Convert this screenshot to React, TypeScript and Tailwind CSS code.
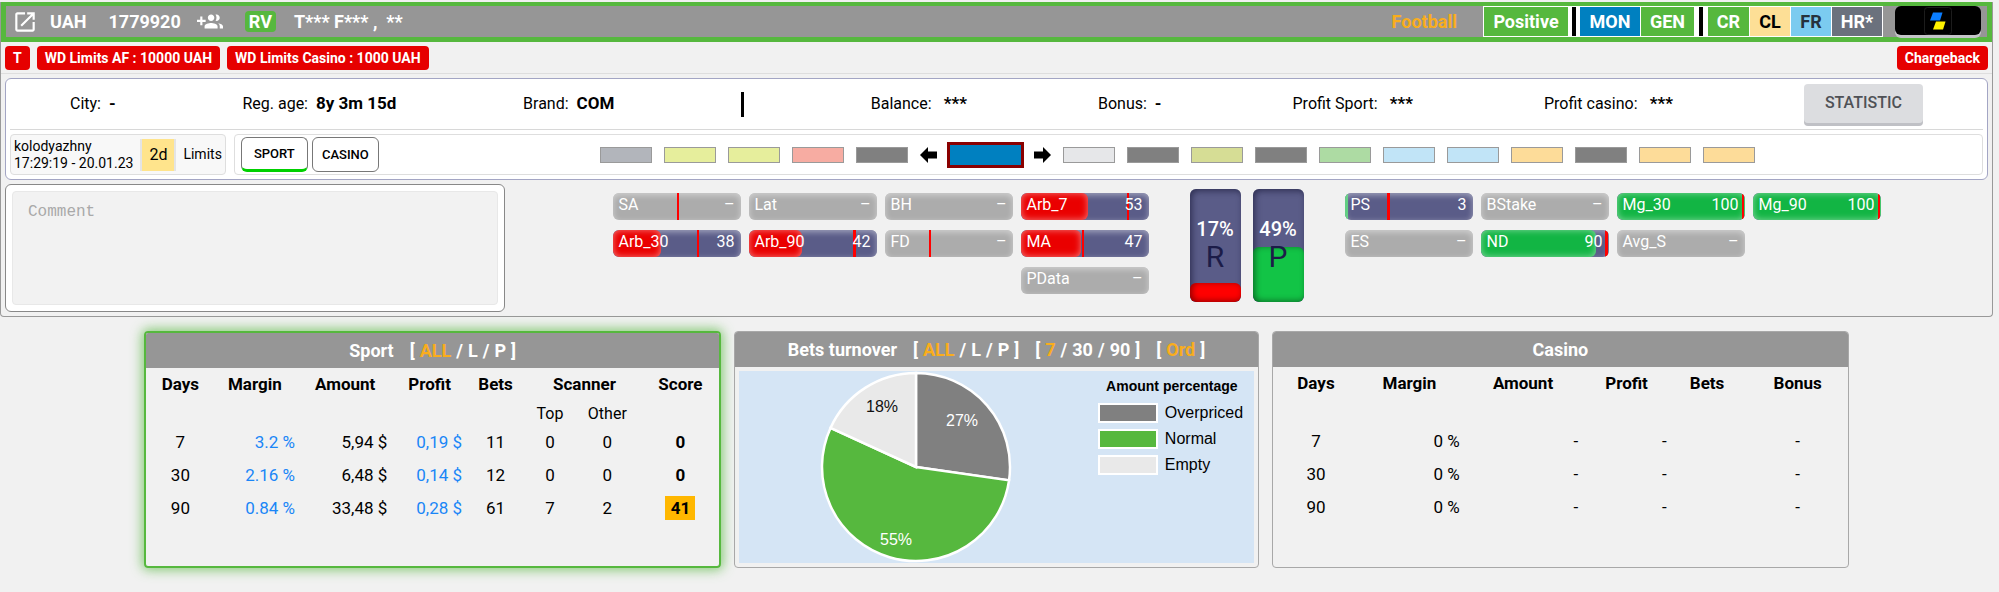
import { ReactNode } from "react";

type Gauge = {
    label: string
    value?: number
    mark?: number
    wide?: boolean
    tone?: 'red' | 'green'
}

const leftGauges: (Gauge | null)[] = [
    { label: 'SA', mark: 50 },
    { label: 'Lat' },
    { label: 'BH' },
    { label: 'Arb_7', value: 53, mark: 83, tone: 'red' },
    { label: 'Arb_30', value: 38, mark: 66, tone: 'red' },
    { label: 'Arb_90', value: 42, mark: 82, wide: true, tone: 'red' },
    { label: 'FD', mark: 35 },
    { label: 'MA', value: 47, mark: 48, tone: 'red' },
    null,
    null,
    null,
    { label: 'PData' },
]

const rightGauges: Gauge[] = [
    { label: 'PS', value: 3, mark: 33, wide: true, tone: 'green' },
    { label: 'BStake' },
    { label: 'Mg_30', value: 100, mark: 98, tone: 'green' },
    { label: 'Mg_90', value: 100, mark: 98, tone: 'green' },
    { label: 'ES' },
    { label: 'ND', value: 90, mark: 97, wide: true, tone: 'green' },
    { label: 'Avg_S' },
]

const before = ['bg-[#b2b5bb]', 'bg-[#e6ee9c]', 'bg-[#e6ee9c]', 'bg-[#f7aca2]', 'bg-[#808080]']
const after = [
    'bg-[#e6e7e9]', 'bg-[#808080]', 'bg-[#d6dd95]', 'bg-[#808080]', 'bg-[#addba3]', 'bg-[#c1e4f7]',
    'bg-[#c1e4f7]', 'bg-[#fddc99]', 'bg-[#808080]', 'bg-[#fddc99]', 'bg-[#fddc99]',
]

const sportRows = [
    { days: 7, margin: '3.2 %', amount: '5,94 $', profit: '0,19 $', bets: 11, top: 0, other: 0, score: 0 },
    { days: 30, margin: '2.16 %', amount: '6,48 $', profit: '0,14 $', bets: 12, top: 0, other: 0, score: 0 },
    { days: 90, margin: '0.84 %', amount: '33,48 $', profit: '0,28 $', bets: 61, top: 7, other: 2, score: 41 },
]

const slices = [
    { name: 'Overpriced', part: 3, fill: '#808080', swatch: 'bg-[#808080]' },
    { name: 'Normal', part: 6, fill: '#56b83e', swatch: 'bg-[#56b83e]' },
    { name: 'Empty', part: 2, fill: '#e9e9e9', swatch: 'bg-[#e9e9e9]' },
]

function GaugeBar({ label, value, mark, wide, tone }: Gauge) {
    const empty = value === undefined
    return (
        <div className={`relative h-[27px] w-32 overflow-hidden rounded-md ${empty ? 'bg-[#acacac]' : 'bg-[#5a5c88]'}`}>
            <div className="absolute inset-0 rounded-md shadow-[inset_0_2px_6px_rgba(255,255,255,0.45)]" />
            {!empty && (
                <div
                    className={`absolute inset-y-0 left-0 rounded-md shadow-[inset_0_0_7px_rgba(255,255,255,0.5)] ${tone === 'red' ? 'bg-[#ea0000]' : 'bg-[#12b544]'}`}
                    style={{ width: `${value}%` }}
                />
            )}
            {mark !== undefined && (
                <div className={`absolute inset-y-0 bg-[#ff0000] ${wide ? 'w-[3px]' : 'w-[2px]'}`} style={{ left: `${mark}%` }} />
            )}
            <div className="relative flex justify-between px-1.5 text-[16px] leading-6 text-white">
                <span>{label}</span>
                <span>{empty ? '–' : value}</span>
            </div>
        </div>
    )
}

function Tower({ value, letter, fill }: { value: number, letter: string, fill: string }) {
    return (
        <div className="relative h-[113px] w-[51px] overflow-hidden rounded-md bg-[#5a5c88] text-center shadow-[inset_2px_2px_6px_rgba(20,20,50,0.6)]">
            <div className={`absolute inset-x-0 bottom-0 rounded-md shadow-[inset_2px_-1px_6px_rgba(0,0,0,0.45)] ${fill}`} style={{ height: `${value}%` }} />
            <div className="relative pt-7">
                <p className="text-[20px] font-medium leading-6 text-white">{value}%</p>
                <p className="text-[30px] leading-8 text-[#1c1c48]">{letter}</p>
            </div>
        </div>
    )
}

function Tag({ children }: { children: ReactNode }) {
    return <span className="rounded bg-[#e60000] px-2 text-[14px] font-bold leading-6 text-white">{children}</span>
}

function Info({ label, value }: { label: string, value: string }) {
    return (
        <p className="whitespace-pre text-[16px]">
            {label}:<span className="ml-2 text-[17px] font-bold">{value}</span>
        </p>
    )
}

function Filter({ items }: { items: string[] }) {
    return (
        <div className="flex gap-[5px]">
            <span>[</span>
            {items.map((item, i) => (
                <span key={item} className="flex gap-[5px]">
                    {i > 0 && <span>/</span>}
                    <button className={i === 0 ? 'text-[#f9ad1c]' : ''}>{item}</button>
                </span>
            ))}
            <span>]</span>
        </div>
    )
}

function Card({ title, filters = [], active, children }: { title: string, filters?: string[][], active?: boolean, children: ReactNode }) {
    return (
        <section className={`flex min-h-[237px] flex-col overflow-hidden rounded ${active ? 'border-2 border-[#56b83e] shadow-[0_0_12px_2px_rgba(86,184,62,0.7)]' : 'border border-[#a8a8a8]'}`}>
            <header className="flex h-[35px] shrink-0 items-center justify-center gap-4 bg-[#969696] text-[18px] font-bold text-white">
                <h2>{title}</h2>
                {filters.map((items) => <Filter key={items[0]} items={items} />)}
            </header>
            {children}
        </section>
    )
}

function Pie() {
    const total = slices.reduce((sum, s) => sum + s.part, 0)
    const point = (n: number) => {
        const a = (n / total) * Math.PI * 2
        return `${96 + 94 * Math.sin(a)} ${96 - 94 * Math.cos(a)}`
    }
    let start = 0
    return (
        <svg viewBox="0 0 192 192" className="h-48 w-48" fontSize="16">
            {slices.map((s) => {
                const from = start
                start += s.part
                return (
                    <path
                        key={s.name}
                        d={`M96 96L${point(from)}A94 94 0 ${s.part > total / 2 ? 1 : 0} 1 ${point(start)}Z`}
                        fill={s.fill}
                        stroke="#fff"
                        strokeWidth="2.5"
                    />
                )
            })}
            <text x="142" y="55" textAnchor="middle" fill="#fff">27%</text>
            <text x="76" y="174" textAnchor="middle" fill="#fff">55%</text>
            <text x="62" y="41" textAnchor="middle" fill="#111">18%</text>
        </svg>
    )
}

function Swatch({ color }: { color: string }) {
    return <button aria-label="level" className={`h-4 w-[52px] border border-[#9a9a9a] ${color}`} />
}

function Arrow({ flip }: { flip?: boolean }) {
    return (
        <svg viewBox="0 0 17 16" className={`h-4 w-[17px] ${flip ? 'rotate-180' : ''}`}>
            <path d="M0 8L8 0V4.5H17V11.5H8V16Z" />
        </svg>
    )
}

export default function App() {
    return (
        <div className="min-h-screen bg-[#f1f1f1] pr-1.5 pt-0.5 font-['Roboto',sans-serif] text-black">
            <div className="rounded-b border border-t-0 border-[#999] pb-1">
                {/* Player bar */}
                <header className="flex h-10 items-center border-[5px] border-t-4 border-[#56b83e] bg-[#969696] text-[18px] font-bold text-white">
                    <a href="#" aria-label="Open player" className="ml-1.5">
                        <svg viewBox="0 0 24 24" className="h-[26px] w-[26px]" fill="currentColor">
                            <path d="M19 19H5V5h7V3H5c-1.11 0-2 .9-2 2v14c0 1.1.89 2 2 2h14c1.1 0 2-.9 2-2v-7h-2v7zM14 3v2h3.59l-9.83 9.83 1.41 1.41L19 6.41V10h2V3h-7z" />
                        </svg>
                    </a>
                    <span className="ml-3">UAH</span>
                    <span className="ml-[22px]">1779920</span>
                    <button aria-label="Add to group" className="ml-4">
                        <svg viewBox="0 0 24 24" className="h-[26px] w-[26px]" fill="currentColor">
                            <path d="M8 10H5V7H3v3H0v2h3v3h2v-3h3v-2zm10 1c1.66 0 2.99-1.34 2.99-3S19.66 5 18 5c-.32 0-.63.05-.91.14.57.81.9 1.79.9 2.86s-.34 2.04-.9 2.86c.28.09.59.14.91.14zm-5 0c1.66 0 2.99-1.34 2.99-3S14.66 5 13 5c-1.66 0-3 1.34-3 3s1.34 3 3 3zm6.62 2.16c.83.73 1.38 1.66 1.38 2.84v2h3v-2c0-1.54-2.37-2.49-4.38-2.84zM13 13c-2 0-6 1-6 3v2h12v-2c0-2-4-3-6-3z" />
                        </svg>
                    </button>
                    <span className="ml-[22px] rounded bg-[#56b83e] px-1 leading-[21px]">RV</span>
                    <span className="ml-[18px]">T*** F*** ,&nbsp; **</span>
                    <span className="ml-auto mr-[26px] text-[#f9ad1c]">Football</span>
                    <div className="flex h-full gap-px bg-white p-px text-center leading-[30px]">
                        <span className="w-[84px] bg-[#56b83e]">Positive</span>
                        <span className="mx-[3px] w-1 bg-black" />
                        <span className="w-[60px] bg-[#0080c0]">MON</span>
                        <span className="w-[53px] bg-[#56b83e]">GEN</span>
                        <span className="mx-1 w-1 bg-black" />
                        <span className="w-[41px] bg-[#56b83e]">CR</span>
                        <span className="w-10 bg-[#fddf96] text-black">CL</span>
                        <span className="w-10 bg-[#7bcbf0] text-[#26323c]">FR</span>
                        <span className="w-[50px] bg-[#6b717d]">HR*</span>
                    </div>
                    <button aria-label="Open profile" className="mb-0.5 ml-3 mr-1.5 flex h-[29px] w-[86px] items-center justify-center rounded-md bg-black shadow-[0_3px_0_#c4c4c8]">
                        <svg viewBox="0 0 28 28" className="h-7 w-7">
                            <rect x="0.5" y="0.5" width="27" height="27" rx="3" fill="#000" stroke="#1c1c1c" />
                            <path d="M9 5.500H18.500L16 13.500H6Z" fill="#0a7dff" />
                            <path d="M12 14.500H21.500L19 22.500H9Z" fill="#fff200" />
                        </svg>
                    </button>
                </header>

                <div className="flex gap-[7px] border-b border-[#dedede] px-1 pb-[3px] pt-1">
                    <Tag>T</Tag>
                    <Tag>WD Limits AF : 10000 UAH</Tag>
                    <Tag>WD Limits Casino : 1000 UAH</Tag>
                    <span className="ml-auto flex"><Tag>Chargeback</Tag></span>
                </div>

                <div className="mx-1 mt-1 rounded-md border border-[#a3a5c4] bg-white px-1 pb-1">
                    <div className="flex h-[51px] items-center justify-between border-b border-[#d8d8d8] px-[60px]">
                        <Info label="City" value="-" />
                        <Info label="Reg. age" value="8y 3m 15d" />
                        <Info label="Brand" value="COM" />
                        <span className="h-[25px] w-[3px] bg-black" />
                        <Info label="Balance" value=" *** " />
                        <Info label="Bonus" value="- " />
                        <Info label="Profit Sport" value=" *** " />
                        <Info label="Profit casino" value=" *** " />
                        <button className="mb-0.5 h-[39px] w-[119px] rounded bg-[#dcdde0] text-[16px] font-medium text-[#4f5156] shadow-[0_3px_0_#bfc0c5]">STATISTIC</button>
                    </div>

                    <div className="mt-1 flex h-[41px] gap-2">
                        <div className="flex items-center rounded border border-[#dedede] bg-[#f8f8f8] px-[3px] text-[14px]">
                            <p className="leading-[17px]">kolodyazhny<br />17:29:19 - 20.01.23</p>
                            <span className="ml-[7px] border-x-2 border-[#e4e4e4] bg-[#ffe48c] px-[7px] text-[16px] leading-8">2d</span>
                            <span className="ml-[7px]">Limits</span>
                        </div>
                        <div className="flex flex-1 items-center gap-1 rounded border border-[#dedede] px-1.5">
                            <button className="h-[35px] w-[67px] rounded-md border border-b-[3px] border-[#777] border-b-[#00d000] text-[13px] font-medium">SPORT</button>
                            <button className="h-[35px] w-[67px] rounded-md border border-[#777] text-[13px] font-medium">CASINO</button>
                            <div className="flex flex-1 items-center justify-center gap-3 pr-1">
                                {before.map((c, i) => <Swatch key={i} color={c} />)}
                                <div className="flex items-center gap-2.5">
                                    <button aria-label="Previous level"><Arrow /></button>
                                    <span className="h-[26px] w-[77px] border-[3px] border-[#8a0000] bg-[#0080c0]" />
                                    <button aria-label="Next level"><Arrow flip /></button>
                                </div>
                                {after.map((c, i) => <Swatch key={i} color={c} />)}
                            </div>
                        </div>
                    </div>
                </div>

                <div className="mx-1 mt-1 flex">
                    <div className="flex h-32 w-[500px] rounded-md border border-[#888] bg-white p-1.5">
                        <textarea
                            aria-label="Comment"
                            placeholder="Comment"
                            className="w-full resize-none rounded border border-[#e8e8e8] bg-[#f2f2f2] px-[15px] py-2 font-['Liberation_Mono',monospace] text-[16px] placeholder:text-[#a9a9a9]"
                        />
                    </div>
                    <div className="flex flex-1 justify-center gap-[41px] pt-[5px]">
                        <div className="mt-1 grid grid-cols-4 content-start gap-x-2 gap-y-2.5">
                            {leftGauges.map((g, i) => g ? <GaugeBar key={i} {...g} /> : <span key={i} />)}
                        </div>
                        <div className="flex gap-3">
                            <Tower value={17} letter="R" fill="bg-[#ff0000]" />
                            <Tower value={49} letter="P" fill="bg-[#12c446]" />
                        </div>
                        <div className="mt-1 grid grid-cols-4 content-start gap-x-2 gap-y-2.5">
                            {rightGauges.map((g) => <GaugeBar key={g.label} {...g} />)}
                        </div>
                    </div>
                </div>
            </div>

            {/* Statistic cards */}
            <main className="grid grid-cols-[11fr_10fr_11fr] gap-x-[13px] px-36 pt-3.5 text-[17px]">
                <Card title="Sport" filters={[['ALL', 'L', 'P']]} active>
                    <table className="w-full table-fixed text-center">
                        <colgroup>
                            <col className="w-[12%]" />
                            <col className="w-[14%]" />
                            <col className="w-[17.5%]" />
                            <col className="w-[12%]" />
                            <col className="w-[11%]" />
                            <col className="w-[8%]" />
                            <col className="w-[12%]" />
                            <col className="w-[13.5%]" />
                        </colgroup>
                        <thead>
                            <tr className="h-[34px]">
                                <th>Days</th>
                                <th>Margin</th>
                                <th>Amount</th>
                                <th>Profit</th>
                                <th>Bets</th>
                                <th colSpan={2}>Scanner</th>
                                <th>Score</th>
                            </tr>
                            <tr className="h-6 text-[16px]">
                                <td colSpan={5} />
                                <td>Top</td>
                                <td>Other</td>
                                <td />
                            </tr>
                        </thead>
                        <tbody>
                            {sportRows.map((r) => (
                                <tr key={r.days} className="h-[33px]">
                                    <td>{r.days}</td>
                                    <td className="text-right text-[#1a86f7]">{r.margin}</td>
                                    <td className="pr-2 text-right">{r.amount}</td>
                                    <td className="pr-0.5 text-right text-[#1a86f7]">{r.profit}</td>
                                    <td>{r.bets}</td>
                                    <td>{r.top}</td>
                                    <td>{r.other}</td>
                                    <td className="font-bold">
                                        <span className={r.score > 40 ? 'inline-block w-[30px] bg-[#ffb700] leading-6' : ''}>{r.score}</span>
                                    </td>
                                </tr>
                            ))}
                        </tbody>
                    </table>
                </Card>

                <Card title="Bets turnover" filters={[['ALL', 'L', 'P'], ['7', '30', '90'], ['Ord']]}>
                    <div className="m-1 flex flex-1 bg-[#d5e5f5] font-['Liberation_Sans',sans-serif]">
                        <div className="flex flex-1 items-center justify-center pr-0.5">
                            <Pie />
                        </div>
                        <div className="w-40 pl-1 pt-1.5 text-[16px]">
                            <p className="mb-2 pr-2 text-center text-[14px] font-bold leading-[18px]">Amount percentage</p>
                            {slices.map((s) => (
                                <div key={s.name} className="mb-1.5 flex items-center gap-[7px] leading-5">
                                    <span className={`h-5 w-[60px] border-2 border-white ${s.swatch}`} />
                                    {s.name}
                                </div>
                            ))}
                        </div>
                    </div>
                </Card>

                <Card title="Casino">
                    <table className="w-full table-fixed text-center">
                        <thead>
                            <tr className="h-[34px]">
                                <th className="w-[15%]">Days</th>
                                <th className="w-[17.5%]">Margin</th>
                                <th className="w-[22%]">Amount</th>
                                <th className="w-[14%]">Profit</th>
                                <th className="w-[14%]">Bets</th>
                                <th className="w-[17.5%]">Bonus</th>
                            </tr>
                            <tr className="h-6"><td colSpan={6} /></tr>
                        </thead>
                        <tbody>
                            {[7, 30, 90].map((days) => (
                                <tr key={days} className="h-[33px]">
                                    <td>{days}</td>
                                    <td className="text-right">0 %</td>
                                    <td className="pr-2 text-right">-</td>
                                    <td className="text-right">-</td>
                                    <td />
                                    <td>-</td>
                                </tr>
                            ))}
                        </tbody>
                    </table>
                </Card>
            </main>
        </div>
    )
}
